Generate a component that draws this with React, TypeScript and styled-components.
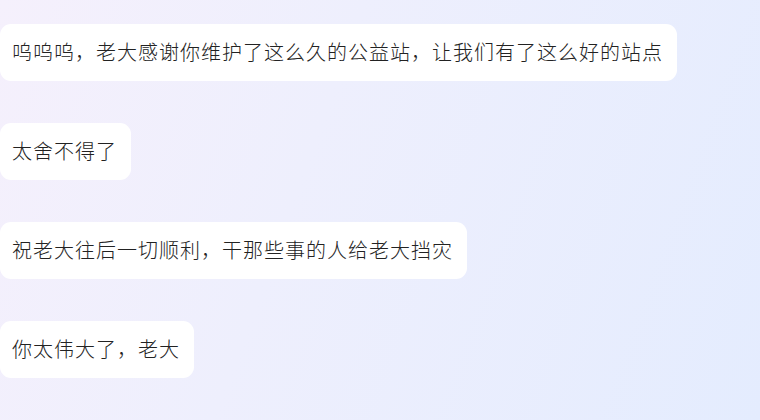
import React from 'react';
import styled, { createGlobalStyle } from 'styled-components';

const GlobalStyle = createGlobalStyle`
  html, body {
    margin: 0;
    padding: 0;
  }
  body {
    font-family: "Noto Sans CJK SC", "Noto Sans", sans-serif;
  }
`;

const Page = styled.div`
  width: 760px;
  height: 420px;
  box-sizing: border-box;
  padding-top: 24px;
  display: flex;
  flex-direction: column;
  align-items: flex-start;
  gap: 42px;
  overflow: hidden;
  background: linear-gradient(110deg, #f5f0fc 0%, #eeeffd 40%, #e4ecfe 100%);
`;

const Bubble = styled.div`
  background: #ffffff;
  border-radius: 11px;
  padding: 14px 14px 15px 12px;
  font-size: 20px;
  font-weight: 300;
  line-height: 28px;
  letter-spacing: 1px;
  color: #222222;
  white-space: nowrap;
`;

const messages = [
    '呜呜呜，老大感谢你维护了这么久的公益站，让我们有了这么好的站点',
    '太舍不得了',
    '祝老大往后一切顺利，干那些事的人给老大挡灾',
    '你太伟大了，老大',
];

const App = () => (
    <>
        <GlobalStyle />
        <Page>
            {messages.map((text) => (
                <Bubble key={text}>{text}</Bubble>
            ))}
        </Page>
    </>
);

export default App;
